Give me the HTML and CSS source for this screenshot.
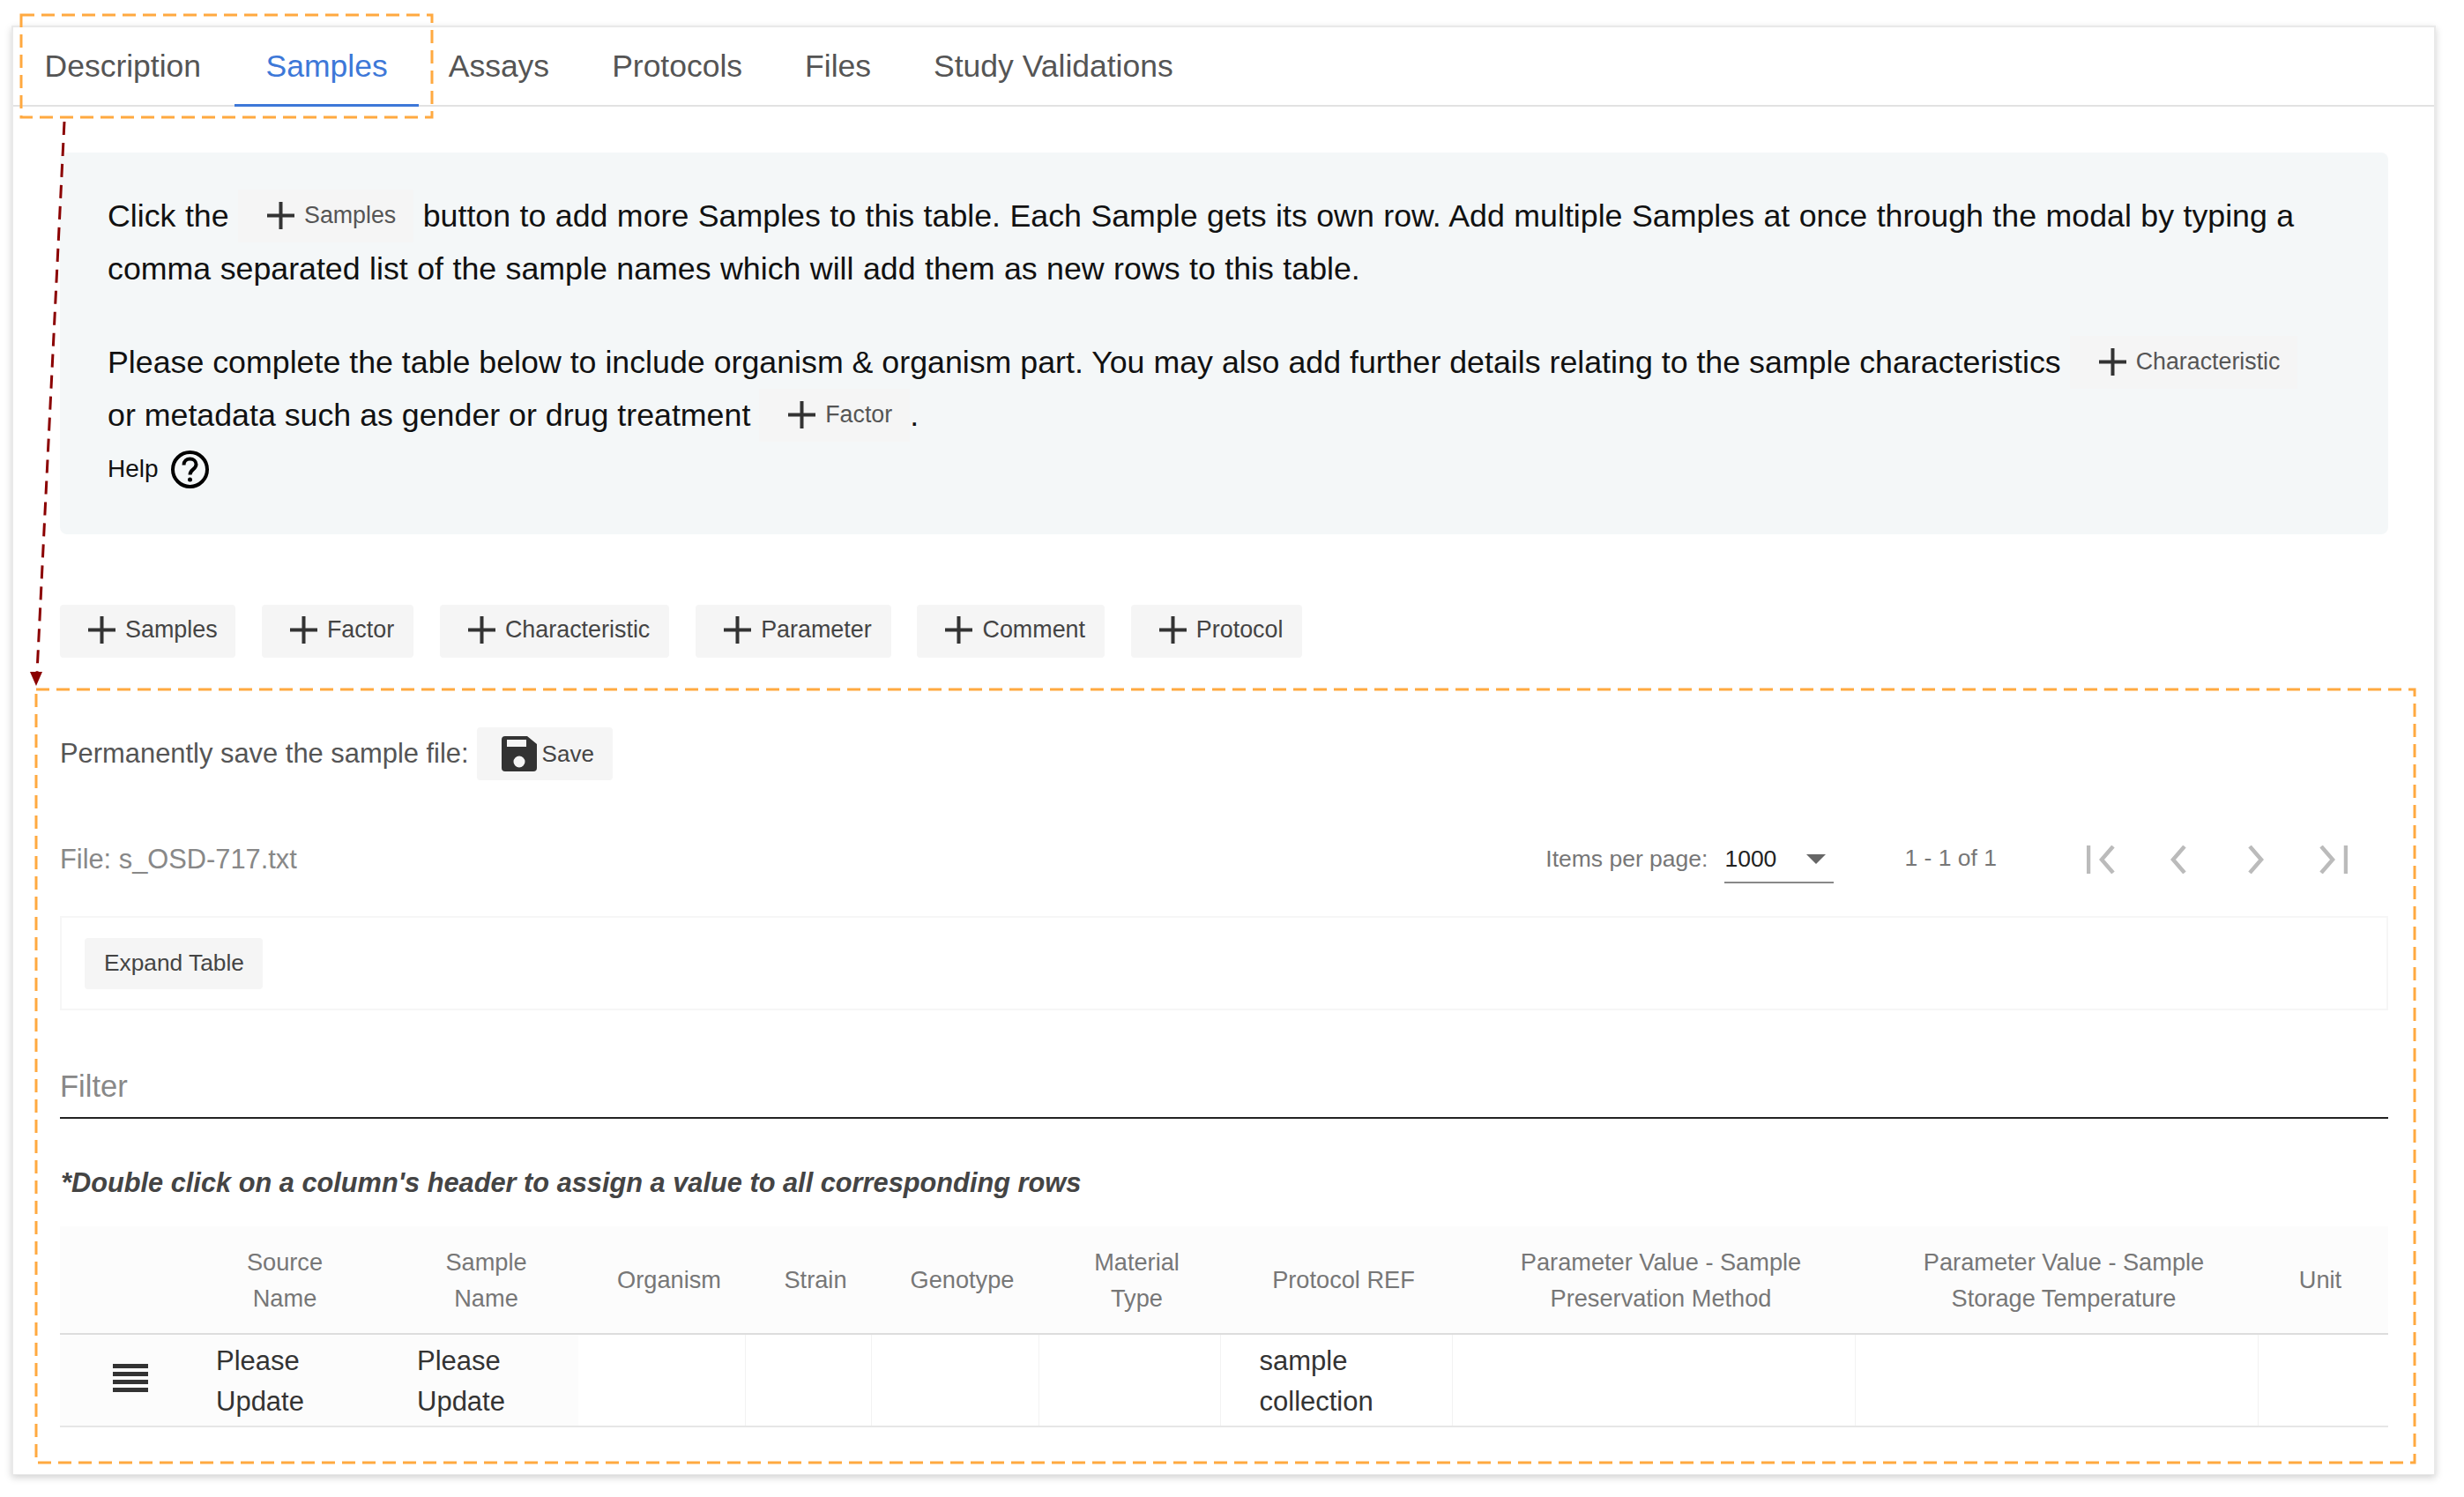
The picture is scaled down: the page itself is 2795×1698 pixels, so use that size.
FILE: index.html
```html
<!DOCTYPE html>
<html lang="en">
<head>
    <meta charset="UTF-8">
    <meta name="viewport" content="width=device-width, initial-scale=1.0">
    <title>Study Samples</title>
    <link rel="stylesheet" href="styles.css">
</head>
<body>
    <div class="card">
        <div class="tabs">
            <div class="tab">Description</div>
            <div class="tab active">Samples</div>
            <div class="tab">Assays</div>
            <div class="tab">Protocols</div>
            <div class="tab">Files</div>
            <div class="tab">Study Validations</div>
        </div>

        <div class="info">
            <p class="first">Click the <span class="chip"><svg class="plus" viewBox="0 0 31 31"><path d="M15.5 0V31M0 15.5H31"/></svg>Samples</span> button to add more Samples to this table. Each Sample gets its own row. Add multiple Samples at once through the modal by typing a<br>comma separated list of the sample names which will add them as new rows to this table.</p>
            <p class="second">Please complete the table below to include organism &amp; organism part. You may also add further details relating to the sample characteristics <span class="chip"><svg class="plus" viewBox="0 0 31 31"><path d="M15.5 0V31M0 15.5H31"/></svg>Characteristic</span><br>or metadata such as gender or drug treatment <span class="chip"><svg class="plus" viewBox="0 0 31 31"><path d="M15.5 0V31M0 15.5H31"/></svg>Factor</span>.</p>
            <div class="help">Help
                <svg class="help-icon" viewBox="0 0 43 43"><circle cx="21.5" cy="21.5" r="19.5"/><path d="M14.5 16.5c0-4.5 3.2-7 7-7s7 2.5 7 6.3c0 5.6-7 5.6-7 11.7"/><circle class="dot" cx="21.5" cy="33" r="2.5"/></svg>
            </div>
        </div>

        <div class="toolbar">
            <div class="btn btn-samples"><svg class="plus" viewBox="0 0 31 31"><path d="M15.5 0V31M0 15.5H31"/></svg>Samples</div>
            <div class="btn"><svg class="plus" viewBox="0 0 31 31"><path d="M15.5 0V31M0 15.5H31"/></svg>Factor</div>
            <div class="btn"><svg class="plus" viewBox="0 0 31 31"><path d="M15.5 0V31M0 15.5H31"/></svg>Characteristic</div>
            <div class="btn"><svg class="plus" viewBox="0 0 31 31"><path d="M15.5 0V31M0 15.5H31"/></svg>Parameter</div>
            <div class="btn"><svg class="plus" viewBox="0 0 31 31"><path d="M15.5 0V31M0 15.5H31"/></svg>Comment</div>
            <div class="btn"><svg class="plus" viewBox="0 0 31 31"><path d="M15.5 0V31M0 15.5H31"/></svg>Protocol</div>
        </div>

        <div class="save-row">
            <span>Permanently save the sample file:</span>
            <div class="btn btn-save">
                <svg class="save-icon" viewBox="0 0 40 40"><path fill-rule="evenodd" d="M4 0H29L40 9V36a4 4 0 0 1-4 4H4a4 4 0 0 1-4-4V4a4 4 0 0 1 4-4ZM6 4V12H28V4ZM20 22.5a6.5 6.5 0 1 0 0 13a6.5 6.5 0 1 0 0-13Z"/></svg>
                Save
            </div>
        </div>

        <div class="file-row">
            <div class="file-name">File: s_OSD-717.txt</div>
            <div class="paginator">
                <span class="per-page">Items per page:</span>
                <div class="page-select">
                    <span>1000</span>
                    <svg class="caret" viewBox="0 0 22 11"><path d="M0 0H22L11 11Z"/></svg>
                </div>
                <span class="range">1 - 1 of 1</span>
                <svg class="pager first" viewBox="0 0 32 32"><path d="M2 0V32M30 1L17 16L30 31"/></svg>
                <svg class="pager prev" viewBox="0 0 32 32"><path d="M23 1L10 16L23 31"/></svg>
                <svg class="pager next" viewBox="0 0 32 32"><path d="M9 1L22 16L9 31"/></svg>
                <svg class="pager last" viewBox="0 0 32 32"><path d="M2 1L15 16L2 31M30 0V32"/></svg>
            </div>
        </div>

        <div class="expand-panel">
            <div class="btn btn-expand">Expand Table</div>
        </div>

        <div class="filter">Filter</div>

        <p class="hint">*Double click on a column's header to assign a value to all corresponding rows</p>

        <table class="samples">
            <colgroup>
                <col class="col-handle">
                <col class="col-source">
                <col class="col-sample">
                <col class="col-organism">
                <col class="col-strain">
                <col class="col-genotype">
                <col class="col-material">
                <col class="col-protocol">
                <col class="col-param">
                <col class="col-param">
                <col>
            </colgroup>
            <thead>
                <tr>
                    <th></th>
                    <th>Source<br>Name</th>
                    <th class="shift-sm">Sample<br>Name</th>
                    <th class="shift">Organism</th>
                    <th class="shift">Strain</th>
                    <th class="shift">Genotype</th>
                    <th class="shift">Material<br>Type</th>
                    <th class="shift">Protocol REF</th>
                    <th class="shift">Parameter Value - Sample<br>Preservation Method</th>
                    <th class="shift">Parameter Value - Sample<br>Storage Temperature</th>
                    <th class="unit">Unit</th>
                </tr>
            </thead>
            <tbody>
                <tr>
                    <td class="sticky"><div class="handle"><span></span><span></span><span></span><span></span></div></td>
                    <td class="sticky">Please<br>Update</td>
                    <td class="sticky">Please<br>Update</td>
                    <td></td>
                    <td class="ruled"></td>
                    <td class="ruled"></td>
                    <td class="ruled"></td>
                    <td class="ruled protocol-cell">sample<br>collection</td>
                    <td class="ruled"></td>
                    <td class="ruled"></td>
                    <td class="ruled"></td>
                </tr>
            </tbody>
        </table>
    </div>

    <!-- annotation drawn over the screenshot -->
    <svg class="notes" viewBox="0 0 2795 1698">
        <rect class="dash-box" x="24" y="17" width="466" height="116"/>
        <rect class="dash-box" x="41" y="782" width="2698" height="877"/>
        <path class="arrow-line" d="M73 138L42 763"/>
        <path class="arrow-head" d="M34 762H48L41 778Z"/>
    </svg>
</body>
</html>
```

FILE: styles.css
```css
* {
    box-sizing: border-box;
}
html, body {
    margin: 0;
    height: 1698px;
    overflow: hidden;
}
body {
    position: relative;
    font-family: "Liberation Sans", Arial, sans-serif;
    color: #111;
    background-color: #fff;
}
.card {
    width: 2750px;
    height: 1644px;
    margin: 29px 0 0 13px;
    padding: 0 52px 0 53px;
    border: 2px solid #e9e9e9;
    border-bottom-width: 1px;
    box-shadow: 0 3px 8px rgba(0,0,0,0.18);
}

/* tabs */
.tabs {
    display: flex;
    height: 90px;
    margin: 0 -52px 0 -53px;
    border-bottom: 2px solid #e2e2e2;
}
.tab {
    padding: 0 35.5px;
    font-size: 35.5px;
    line-height: 88px;
    color: #555;
}
.tab:first-child {
    padding-right: 38px;
}
.tab.active {
    height: 90px;
    margin-right: -2px;
    color: #3d78d8;
    border-bottom: 3px solid #3d78d8;
}

/* info box */
.info {
    height: 433px;
    margin-top: 52px;
    padding: 42px 0 0 54px;
    font-size: 35.75px;
    line-height: 60px;
    background-color: #f4f7f8;
    border-radius: 8px;
}
.info p {
    margin: 0;
}
.info .first {
    word-spacing: 0.5px;
}
.info .second {
    margin-top: 46px;
}
.chip {
    display: inline-block;
    height: 60px;
    padding: 0 20px 0 33px;
    font-size: 26.8px;
    line-height: 58px;
    color: #555;
    background-color: #f5f5f5;
    vertical-align: top;
    white-space: nowrap;
}
.plus {
    width: 31px;
    height: 31px;
    margin-right: 11px;
    vertical-align: -7px;
    fill: none;
    stroke: #333;
    stroke-width: 4;
}
.help {
    display: flex;
    align-items: center;
    gap: 14px;
    height: 60px;
    margin-top: 1px;
    font-size: 28px;
}
.help-icon {
    width: 43px;
    height: 43px;
    fill: none;
    stroke: #000;
    stroke-width: 4;
}
.help-icon .dot {
    fill: #000;
    stroke: none;
}

/* buttons */
.toolbar {
    display: flex;
    gap: 29.8px;
    margin-top: 80px;
}
.btn {
    height: 60px;
    padding: 0 22px 0 32px;
    font-size: 26.9px;
    line-height: 57px;
    color: #444;
    background-color: #f5f5f5;
    border-radius: 4px;
    white-space: nowrap;
}
.btn-samples {
    padding-right: 20.5px;
}
.save-row {
    display: flex;
    align-items: center;
    gap: 9px;
    margin-top: 79px;
    font-size: 30.9px;
    color: #555;
}
.btn-save {
    display: flex;
    align-items: center;
    gap: 6px;
    padding: 0 21px 0 28px;
    font-size: 26px;
}
.save-icon {
    width: 40px;
    height: 40px;
    fill: #333;
}

/* file name and paginator */
.file-row {
    display: flex;
    align-items: center;
    justify-content: space-between;
    height: 60px;
    margin-top: 60px;
}
.file-name {
    font-size: 30.8px;
    color: #888;
}
.paginator {
    display: flex;
    align-items: center;
    height: 60px;
    font-size: 26.5px;
    color: #777;
}
.per-page {
    margin-top: -2px;
}
.page-select {
    display: flex;
    align-items: center;
    justify-content: space-between;
    width: 124px;
    height: 54px;
    margin: 0 0 0 19px;
    padding-right: 9px;
    color: #222;
    border-bottom: 2px solid #888;
}
.caret {
    width: 22px;
    height: 11px;
    fill: #666;
}
.range {
    margin: -4px 102px 0 80px;
}
.pager {
    width: 32px;
    height: 32px;
    fill: none;
    stroke: #bbb;
    stroke-width: 4.5;
}
.prev, .next, .last {
    margin-left: 56px;
}
.last {
    margin-right: 46px;
}

/* expand panel */
.expand-panel {
    height: 107px;
    margin-top: 34px;
    padding: 23px 0 0 26px;
    border: 2px solid #f6f6f6;
}
.btn-expand {
    display: inline-block;
    height: 58px;
    padding: 0 21px 0 22px;
    font-size: 26.3px;
    line-height: 56px;
}

/* filter and table */
.filter {
    height: 123px;
    padding-top: 64px;
    font-size: 34.5px;
    line-height: 44px;
    color: #888;
    border-bottom: 2px solid #222;
}
.hint {
    margin: 55px 0 31px 1px;
    font-size: 30.76px;
    line-height: 36px;
    font-weight: bold;
    font-style: italic;
    color: #444;
}
.samples {
    width: 100%;
    table-layout: fixed;
    border-collapse: collapse;
}
.col-handle { width: 141px; }
.col-source { width: 228px; }
.col-sample { width: 219px; }
.col-organism { width: 189px; }
.col-strain { width: 143px; }
.col-genotype { width: 190px; }
.col-material { width: 206px; }
.col-protocol { width: 263px; }
.col-param { width: 457px; }
.samples th {
    height: 122px;
    padding: 0;
    font-size: 27.2px;
    line-height: 41px;
    font-weight: normal;
    color: #777;
    background-color: #fcfcfc;
    border-bottom: 2px solid #ddd;
}
.samples th.shift-sm {
    padding-left: 10px;
}
.samples th.shift {
    padding-left: 17px;
}
.samples th.unit {
    padding-right: 6px;
}
.samples td {
    height: 105px;
    padding: 2px 0 0 36px;
    font-size: 31px;
    line-height: 46px;
    color: #333;
    border-bottom: 2px solid #e6e6e6;
}
.samples td.sticky {
    background-color: #fcfcfc;
}
.samples td.ruled {
    border-left: 1px solid #f2f2f2;
}
.samples td.protocol-cell {
    padding-left: 44px;
}
.handle {
    display: flex;
    flex-direction: column;
    gap: 4px;
    width: 40px;
    margin: -8px 0 0 24px;
}
.handle span {
    height: 5px;
    background-color: #333;
}

/* annotation overlay */
.notes {
    position: absolute;
    top: 0;
    left: 0;
    width: 2795px;
    height: 1698px;
    pointer-events: none;
}
.dash-box {
    fill: none;
    stroke: #ffa940;
    stroke-width: 3;
    stroke-dasharray: 15 8;
}
.arrow-line {
    fill: none;
    stroke: #8b0000;
    stroke-width: 3;
    stroke-dasharray: 15 9;
}
.arrow-head {
    fill: #8b0000;
}
```
